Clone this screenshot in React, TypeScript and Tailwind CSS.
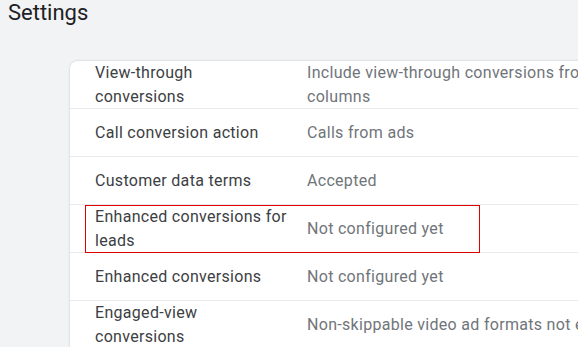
import React from "react";

type Row = {
  label: string[];
  value: string[];
  highlight?: boolean;
};

const rows: Row[] = [
  {
    label: ["View-through", "conversions"],
    value: ["Include view-through conversions from this account in your", "columns"],
  },
  { label: ["Call conversion action"], value: ["Calls from ads"] },
  { label: ["Customer data terms"], value: ["Accepted"] },
  {
    label: ["Enhanced conversions for", "leads"],
    value: ["Not configured yet"],
    highlight: true,
  },
  { label: ["Enhanced conversions"], value: ["Not configured yet"] },
  {
    label: ["Engaged-view", "conversions"],
    value: ["Non-skippable video ad formats not eligible"],
  },
];

function SettingRow({ row }: { row: Row }) {
  return (
    <div className="relative flex h-12 items-center border-b border-[#e8eaed] bg-white">
      <div className="w-[237px] shrink-0 pl-[25px] text-[16px] leading-6 tracking-[0.3px] text-[#3c4043]">
        {row.label.map((l) => (
          <div key={l} className="whitespace-nowrap">
            {l}
          </div>
        ))}
      </div>
      <div className="text-[16px] leading-6 tracking-[0.3px] text-[#70757a]">
        {row.value.map((v) => (
          <div key={v} className="whitespace-nowrap">
            {v}
          </div>
        ))}
      </div>
      {row.highlight && (
        <div className="pointer-events-none absolute top-0 left-[15px] h-12 w-[395px] border border-[#e00000]" />
      )}
    </div>
  );
}

export default function App() {
  return (
    <div
      className="h-[347px] w-[578px] overflow-hidden bg-[#f1f3f4]"
      style={{ fontFamily: "Roboto, 'Liberation Sans', sans-serif" }}
    >
      <h1 className="pl-2 text-[22px] leading-[26px] text-[#202124]">Settings</h1>
      <div className="mt-[35px] ml-[70px] w-[700px] overflow-hidden rounded-tl-lg bg-white shadow-[0_0_2px_rgba(60,64,67,0.3)]">
        {rows.map((r, i) => (
          <SettingRow key={i} row={r} />
        ))}
      </div>
    </div>
  );
}
